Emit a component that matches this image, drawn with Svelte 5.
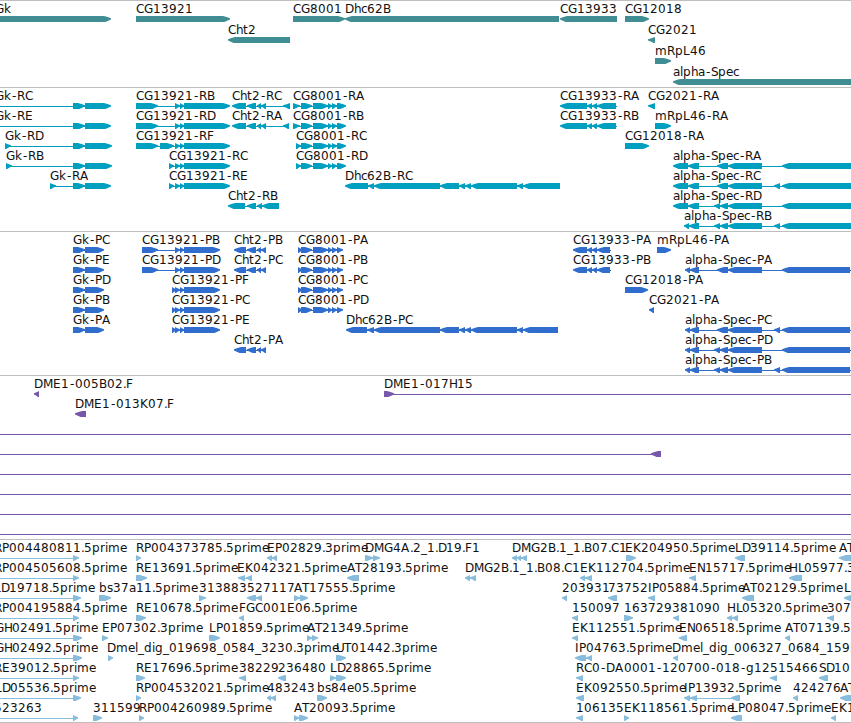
<script>
  // Feature: [row, label, label x, strand, blocks, connector end]
  const gk = (end) => [[73, 85], [85, end]];
  const cgTail = (end) => [[175, 180], [180, 184], [184, end]];
  const cht = [[247, 256], [257, 261], [261, 266]];
  const cg8 = [[301, 312], [313, 328], [328, 332], [332, 337]];
  const dhc = [[374, 440], [440, 459], [459, 465], [465, 471], [471, 517], [517, 523]];
  const cg33 = [[587, 592], [592, 597]];
  const s1 = [[717, 728], [728, 762]];
  const s2 = [[714, 720], [720, 728], [728, 762]];
  const mid = [[774, 780]];

  const genes = [
    [0, 'Gk', -5, 1, [[-10, 111]]],
    [0, 'CG13921', 136, 1, [[136, 230]]],
    [1, 'Cht2', 228, -1, [[228, 290]]],
    [0, 'CG8001', 293, 1, [[293, 345]]],
    [0, 'Dhc62B', 345, -1, [[345, 559]]],
    [0, 'CG13933', 560, -1, [[560, 617]]],
    [0, 'CG12018', 625, 1, [[625, 649]]],
    [1, 'CG2021', 648, -1, [[648, 655]]],
    [2, 'mRpL46', 655, 1, [[655, 671]]],
    [3, 'alpha-Spec', 673, -1, [[673, 860]]]
  ];

  const transcripts = [
    [0, 'Gk-RC', -5, 1, [[-20, -10], ...gk(111)]],
    [1, 'Gk-RE', -5, 1, [[-20, -10], ...gk(111)]],
    [2, 'Gk-RD', 5, 1, [[5, 11], ...gk(112)]],
    [3, 'Gk-RB', 6, 1, [[6, 12], ...gk(112)]],
    [4, 'Gk-RA', 50, 1, [[50, 56], ...gk(111)]],
    [0, 'CG13921-RB', 136, 1, [[136, 158], ...cgTail(230)]],
    [1, 'CG13921-RD', 136, 1, [[136, 158], ...cgTail(230)]],
    [2, 'CG13921-RF', 136, 1, [[136, 158], [160, 174], ...cgTail(230)]],
    [3, 'CG13921-RC', 169, 1, [[169, 174], ...cgTail(230)]],
    [4, 'CG13921-RE', 169, 1, [[169, 174], ...cgTail(230)]],
    [0, 'Cht2-RC', 232, -1, [[232, 246], ...cht, [283, 290]]],
    [1, 'Cht2-RA', 232, -1, [[232, 246], ...cht, [283, 289]]],
    [5, 'Cht2-RB', 228, -1, [[228, 245], [247, 256], [257, 262], [262, 279]]],
    [0, 'CG8001-RA', 293, 1, [[293, 300], ...cg8, [337, 346]]],
    [1, 'CG8001-RB', 293, 1, [[293, 300], ...cg8, [337, 346]]],
    [2, 'CG8001-RC', 296, 1, [[296, 301], ...cg8, [337, 346]]],
    [3, 'CG8001-RD', 296, 1, [[296, 301], ...cg8, [337, 346]]],
    [4, 'Dhc62B-RC', 345, -1, [[345, 368], [368, 374], ...dhc, [523, 560]]],
    [0, 'CG13933-RA', 560, -1, [[560, 587], ...cg33, [597, 616]], 617],
    [1, 'CG13933-RB', 560, -1, [[560, 587], ...cg33, [597, 616]], 617],
    [0, 'CG2021-RA', 648, -1, [[648, 655]]],
    [1, 'mRpL46-RA', 655, 1, [[655, 671]]],
    [2, 'CG12018-RA', 625, 1, [[625, 649]]],
    [3, 'alpha-Spec-RA', 673, -1, [[673, 688], [688, 699], ...s1, [782, 860]]],
    [4, 'alpha-Spec-RC', 673, -1, [[673, 688], [688, 699], ...s1, ...mid, [782, 860]]],
    [5, 'alpha-Spec-RD', 673, -1, [[673, 688], [688, 699], ...s2, [782, 860]]],
    [6, 'alpha-Spec-RB', 684, -1, [[684, 689], [689, 699], ...s2, ...mid, [782, 860]]]
  ];

  const proteins = [
    ...['PC', 'PE', 'PD', 'PB', 'PA'].map((n, i) => [i, 'Gk-' + n, 73, 1, gk(104)]),
    [0, 'CG13921-PB', 142, 1, [[142, 158], ...cgTail(220)]],
    [1, 'CG13921-PD', 142, 1, [[142, 158], ...cgTail(220)]],
    ...['PF', 'PC', 'PE'].map((n, i) => [i + 2, 'CG13921-' + n, 172, 1, [[172, 176], ...cgTail(220)]]),
    [0, 'Cht2-PB', 234, -1, [[234, 246], ...cht]],
    [1, 'Cht2-PC', 234, -1, [[234, 246], ...cht]],
    [5, 'Cht2-PA', 234, -1, [[234, 246], ...cht]],
    ...['PA', 'PB', 'PC', 'PD'].map((n, i) => [i, 'CG8001-' + n, 298, 1, [[298, 302], ...cg8, [337, 343]]]),
    [4, 'Dhc62B-PC', 346, -1, [[346, 367], [367, 374], ...dhc, [523, 558]]],
    [0, 'CG13933-PA', 573, -1, [[573, 587], ...cg33, [597, 610]], 611],
    [1, 'CG13933-PB', 573, -1, [[573, 587], ...cg33, [597, 610]], 611],
    [0, 'mRpL46-PA', 657, 1, [[657, 671]]],
    [2, 'CG12018-PA', 625, 1, [[625, 648]]],
    [3, 'CG2021-PA', 649, -1, [[649, 654]]],
    [1, 'alpha-Spec-PA', 685, -1, [[685, 690], [690, 699], ...s1, [782, 850]], 851],
    [4, 'alpha-Spec-PC', 685, -1, [[685, 690], [690, 699], ...s1, ...mid, [782, 850]], 851],
    [5, 'alpha-Spec-PD', 685, -1, [[685, 690], [690, 699], ...s2, [782, 850]], 851],
    [6, 'alpha-Spec-PB', 685, -1, [[685, 690], [690, 699], ...s2, ...mid, [782, 850]], 851]
  ];

  const clones = [
    [0, 'DME1-005B02.F', 34, -1, [[34, 39]]],
    [1, 'DME1-013K07.F', 75, -1, [[75, 86]]],
    [0, 'DME1-017H15', 384, 1, [[384, 394]], 851],
    [2, '', 0, 1, [], 851],
    [3, '', 0, -1, [[651, 661]]],
    [4, '', 0, 1, [], 851],
    [5, '', 0, 1, [], 851],
    [6, '', 0, 1, [], 851],
    [7, '', 0, 1, [], 851]
  ];

  const off = [-20, -10];
  const ests = [
    [0, 'RP004480811.5prime', -6, 1, [off, [73, 79]]],
    [0, 'RP004373785.5prime', 136, 1, [[136, 141]]],
    [0, 'EP02829.3prime', 267, -1, [[267, 272], [272, 277]]],
    [0, 'DMG4A.2_1.D19.F1', 365, 1, [[365, 373], [373, 380]]],
    [0, 'DMG2B.1_1.B07.C1', 512, -1, [[512, 517], [517, 521], [521, 527]]],
    [0, 'EK204950.5prime', 625, 1, [[626, 636]]],
    [0, 'LD39114.5prime', 735, -1, [[735, 745]]],
    [0, 'AT', 839, -1, [[839, 856]]],
    [1, 'RP004505608.5prime', -6, 1, [off, [73, 79]]],
    [1, 'RE13691.5prime', 136, 1, [[136, 147]]],
    [1, 'EK042321.5prime', 237, -1, [[238, 245], [246, 252]]],
    [1, 'AT28193.5prime', 347, -1, [[347, 359]]],
    [1, 'DMG2B.1_1.B08.C1', 465, -1, [[465, 470], [470, 476]]],
    [1, 'EK112704.5prime', 580, -1, [[580, 585], [585, 592]]],
    [1, 'EN15717.5prime', 689, -1, [[689, 696]]],
    [1, 'HL05977.3', 789, -1, [[789, 802]]],
    [2, 'LD19718.5prime', -6, 1, [off, [73, 81]]],
    [2, 'bs37a11.5prime', 99, 1, [[99, 111]]],
    [2, '313883', 199, 1, [[199, 206]]],
    [2, '527117', 247, -1, [[247, 256], [256, 262]]],
    [2, 'AT17555.5prime', 294, 1, [[294, 300], [300, 308]]],
    [2, '203931', 562, -1, [[562, 567]]],
    [2, '73752', 608, -1, [[608, 617]]],
    [2, 'IP05884.5prime', 648, -1, [[648, 655]]],
    [2, 'AT02129.5prime', 742, -1, [[742, 754]]],
    [2, 'L', 844, -1, [[844, 856]]],
    [3, 'RP004195884.5prime', -6, 1, [off, [73, 79]]],
    [3, 'RE10678.5prime', 136, 1, [[136, 146]]],
    [3, 'FGC001E06.5prime', 239, -1, [[239, 244]]],
    [3, '150097', 572, -1, [[572, 578]]],
    [3, '163729', 624, 1, [[624, 633]]],
    [3, '381090', 672, -1, [[673, 679]]],
    [3, 'HL05320.5prime', 727, -1, [[727, 732], [732, 738]]],
    [3, '307', 827, -1, [[827, 834]]],
    [4, 'GH02491.5prime', -5, 1, [off, [73, 82]]],
    [4, 'EP07302.3prime', 102, 1, [[102, 108]]],
    [4, 'LP01859.5prime', 209, 1, [[209, 220]]],
    [4, 'AT21349.5prime', 307, 1, [[307, 312], [312, 318]]],
    [4, 'EK112551.5prime', 572, -1, [[572, 578]]],
    [4, 'EN06518.5prime', 679, -1, [[679, 687]]],
    [4, 'AT07139.5', 785, -1, [[785, 790]]],
    [5, 'GH02492.5prime', -5, 1, [off, [73, 82]]],
    [5, 'Dmel_dig_019698_0584_3230.3prime', 107, 1, [[108, 113]]],
    [5, 'UT01442.3prime', 336, 1, [[336, 346]]],
    [5, 'IP04763.5prime', 575, -1, [[575, 586], [586, 592]]],
    [5, 'Dmel_dig_006327_0684_1595', 672, -1, [[673, 678]]],
    [6, 'RE39012.5prime', -6, 1, [off, [73, 79]]],
    [6, 'RE17696.5prime', 136, 1, [[136, 145]]],
    [6, '38229', 239, -1, [[239, 246]]],
    [6, '236480', 278, -1, [[278, 286]]],
    [6, 'LD28865.5prime', 330, 1, [[330, 336], [336, 346]]],
    [6, 'RC0-DA0001-120700-018-g12', 576, -1, [[576, 583]]],
    [6, '515466', 770, -1, [[770, 777]]],
    [6, 'SD10', 819, -1, [[819, 828]]],
    [7, 'LD05536.5prime', -5, 1, [off, [73, 81]]],
    [7, 'RP004532021.5prime', 136, 1, [[136, 141]]],
    [7, '483243', 267, -1, [[267, 271], [271, 276]]],
    [7, 'bs84e05.5prime', 317, 1, [[317, 327]]],
    [7, 'EK092550.5prime', 576, -1, [[576, 584]]],
    [7, 'IP13932.5prime', 684, -1, [[684, 690], [690, 697], [731, 740]]],
    [7, '424276', 793, -1, [[793, 798]]],
    [7, 'AT', 840, -1, [[840, 856]]],
    [8, '523263', -6, 1, [off, [73, 78]]],
    [8, '311599', 93, 1, [[93, 102]]],
    [8, 'RP004260989.5prime', 139, 1, [[139, 144]]],
    [8, 'AT20093.5prime', 294, 1, [[294, 299], [299, 308]]],
    [8, '106135', 576, -1, [[576, 583]]],
    [8, 'EK118561.5prime', 624, 1, [[624, 629]]],
    [8, 'LP08047.5prime', 731, -1, [[731, 742]]],
    [8, 'EK1', 831, -1, [[831, 836]]]
  ];

  const tracks = [
    { name: 'genes', height: 87, pitch: 21, color: '#408e93', items: genes },
    { name: 'transcripts', height: 144, pitch: 20, color: '#009fc0', items: transcripts },
    { name: 'proteins', height: 144, pitch: 20, color: '#306dcd', items: proteins },
    { name: 'clones', height: 164, pitch: 20, color: '#7757a9', items: clones },
    { name: 'ests', height: 183, pitch: 20, color: '#88bcdd', items: ests }
  ];

  // Whole-pixel advance widths of the label font, with tighter or looser pairs
  const adv = {
    '.': 3, '-': 6, _: 6, A: 9, G: 9, M: 10, P: 7, F: 7, L: 7, T: 7, S: 7, I: 4,
    a: 7, c: 6, e: 7, h: 7, i: 3, k: 7, l: 3, m: 12, r: 5, s: 6, t: 5
  };
  const pairs = { AT: 8, DM: 9, Dm: 9, Dh: 9, DA: 9, HL: 9, L0: 6 };
  function glyphXs(s, x) {
    const out = [];
    for (let i = 0; i < s.length; i++) {
      out.push(s[i] === '-' ? x + 1 : x);
      x += pairs[s.slice(i, i + 2)] ?? adv[s[i]] ?? 8;
    }
    return out.join(' ');
  }

  // Bar with a blunt, slightly convex head; narrow bars become plain triangles
  function shape([a, b], strand, y) {
    const w = b - a;
    const h = Math.min(7, w);
    const k = w > 7 ? 1 : 0.4;
    const tip = strand > 0 ? b : a;
    const base = strand > 0 ? a : b;
    const s = strand > 0 ? -1 : 1;
    return (
      `M${base} ${y}H${tip + s * h}L${tip + s * h * 0.5} ${y + 1.3 - 0.4 * k}` +
      `L${tip} ${y + 2.3}V${y + 3.5}L${tip + s * h * 0.4} ${y + 4.2 + 0.5 * k}` +
      `L${tip + s * h * 0.8} ${y + 6}H${base}z`
    );
  }
</script>

<main>
  {#each tracks as t (t.name)}
    <section style:height="{t.height}px">
      <svg width="851" height={t.height - 1} viewBox="0 1 851 {t.height - 1}">
        {#each t.items as [row, label, x, strand, blocks, end]}
          {@const y = 16 + row * t.pitch}
          {@const from = blocks.length && label ? blocks[0][0] + (strand < 0 ? 1 : 0) : 0}
          {@const to = end ?? blocks[blocks.length - 1][1] - 1}
          {#if blocks.length !== 1 || end || !label}
            <rect x={from} y={y + 3} width={to - from} height="1" fill={t.color} />
          {/if}
          <path d={blocks.map((b) => shape(b, strand, y)).join('')} fill={t.color} />
          {#if label}<text x={glyphXs(label, x)} y={y - 3}>{label}</text>{/if}
        {/each}
      </svg>
    </section>
  {/each}
</main>

<style>
  :global(body) {
    margin: 0;
    background: #fff;
  }
  main {
    display: flex;
    flex-direction: column;
    width: 851px;
    height: 723px;
    box-sizing: border-box;
    border-bottom: 1px solid #bebebe;
    overflow: hidden;
    background: #fff;
  }
  section {
    flex: none;
    box-sizing: border-box;
    border-top: 1px solid #bebebe;
  }
  svg {
    display: block;
    overflow: hidden;
  }
  text {
    font: 12px 'DejaVu Sans', sans-serif;
    fill: #111;
    white-space: pre;
  }
</style>
